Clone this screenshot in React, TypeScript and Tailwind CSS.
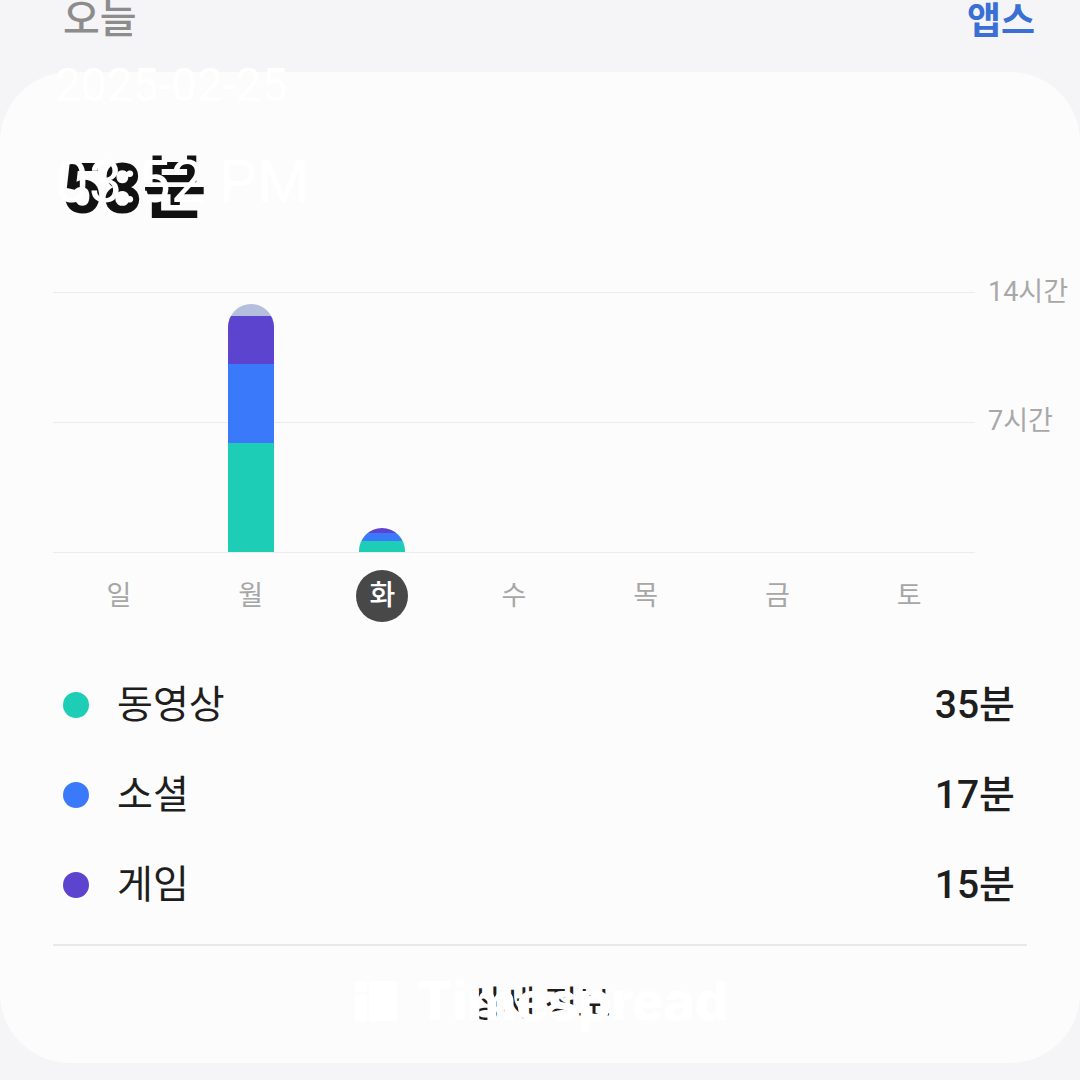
const bars = [
  { day: '일', segments: [] as { color: string; h: number }[] },
  {
    day: '월',
    segments: [
      { color: 'bg-[#b3bfdc]', h: 12 },
      { color: 'bg-[#5c44cf]', h: 48 },
      { color: 'bg-[#3a7afa]', h: 79 },
      { color: 'bg-[#1ecdb6]', h: 109 },
    ],
  },
  {
    day: '화',
    segments: [
      { color: 'bg-[#5c44cf]', h: 5 },
      { color: 'bg-[#3a7afa]', h: 8 },
      { color: 'bg-[#1ecdb6]', h: 11 },
    ],
  },
  { day: '수', segments: [] },
  { day: '목', segments: [] },
  { day: '금', segments: [] },
  { day: '토', segments: [] },
];

const legend = [
  { label: '동영상', value: '35분', dot: 'bg-[#1ecdb6]' },
  { label: '소셜', value: '17분', dot: 'bg-[#3a7afa]' },
  { label: '게임', value: '15분', dot: 'bg-[#5c44cf]' },
];

const Watermark = () => (
  <>
    <div className="absolute left-[55px] top-[62px] text-[46px] leading-none text-white font-['Roboto',sans-serif] pointer-events-none">
      2025-02-25
    </div>
    <div className="absolute left-[55px] top-[152px] text-[60px] leading-none text-white font-['Roboto',sans-serif] pointer-events-none">
      03:52 PM
    </div>
    <div className="absolute left-[355px] top-[975px] h-[52px] flex items-center gap-[20px] pointer-events-none">
      <svg width="42" height="40" viewBox="0 0 42 40" fill="white">
        <rect x="0" y="0" width="12" height="11" rx="2" />
        <rect x="0" y="14" width="12" height="26" rx="2" />
        <rect x="14" y="0" width="28" height="40" rx="2" />
      </svg>
      <span className="text-[53px] leading-none font-extrabold text-white font-['Inter',sans-serif] tracking-[-0.3px]">
        Timespread
      </span>
    </div>
  </>
);

export default function App() {
  return (
    <div className="relative w-[1080px] h-[1080px] overflow-hidden bg-[#f5f5f7] font-['Roboto','Noto_Sans_CJK_KR',sans-serif]">
      <header className="h-[72px] flex justify-between items-start pl-[63px] pr-[45px]">
        <span className="text-[40px] leading-none font-medium text-[#8c8c8c]">오늘</span>
        <span className="text-[37px] leading-none font-bold text-[#3a6fd6] mt-[3px]">앱스</span>
      </header>

      <main className="h-[991px] bg-[#fcfcfc] rounded-[70px] flex flex-col">
        <div className="pt-[82px] pl-[62px] text-[70px] leading-none font-bold text-[#111]">58분</div>

        <div className="mt-[68px] flex pl-[53px]">
          <div className="w-[922px]">
            <div className="relative h-[261px]">
              <div className="absolute inset-0 flex flex-col justify-between">
                <div className="h-px bg-[#ececec]" />
                <div className="h-px bg-[#ececec]" />
                <div className="h-px bg-[#ececec]" />
              </div>
              <div className="relative grid grid-cols-7 h-[260px] items-end">
                {bars.map((b) => (
                  <div key={b.day} className="flex justify-center">
                    {b.segments.length > 0 && (
                      <div className="w-[46px] rounded-t-full overflow-hidden flex flex-col">
                        {b.segments.map((s, i) => (
                          <div key={i} className={s.color} style={{ height: s.h }} />
                        ))}
                      </div>
                    )}
                  </div>
                ))}
              </div>
            </div>

            <div className="mt-[17px] grid grid-cols-7">
              {bars.map((b) => (
                <div key={b.day} className="flex justify-center">
                  {b.day === '화' ? (
                    <div className="w-[52px] h-[52px] rounded-full bg-[#484848] flex items-center justify-center text-[28px] font-medium text-white">
                      {b.day}
                    </div>
                  ) : (
                    <div className="h-[52px] flex items-center text-[27px] text-[#a6a6a6]">{b.day}</div>
                  )}
                </div>
              ))}
            </div>
          </div>

          <div className="pl-[13px] flex flex-col h-[261px] text-[27px] text-[#a8a8a8] whitespace-nowrap">
            <div className="h-[26px] -mt-[13px] leading-[26px]">14시간</div>
            <div className="h-[26px] mt-[103px] leading-[26px]">7시간</div>
          </div>
        </div>

        <div className="mt-[38px] pl-[63px] pr-[65px]">
          {legend.map((l) => (
            <div key={l.label} className="h-[90px] flex items-center">
              <span className={`w-[26px] h-[26px] rounded-full ${l.dot}`} />
              <span className="ml-[28px] text-[39px] text-[#1e1e1e]">{l.label}</span>
              <span className="ml-auto text-[39px] font-medium text-[#1e1e1e]">{l.value}</span>
            </div>
          ))}
        </div>

        <div className="mt-[14px] mx-[53px] h-[2px] bg-[#e8e8e8]" />

        <div className="flex-1 flex items-center justify-center text-[36px] text-[#1e1e1e]">상세 정보</div>
      </main>

      <Watermark />
    </div>
  );
}
